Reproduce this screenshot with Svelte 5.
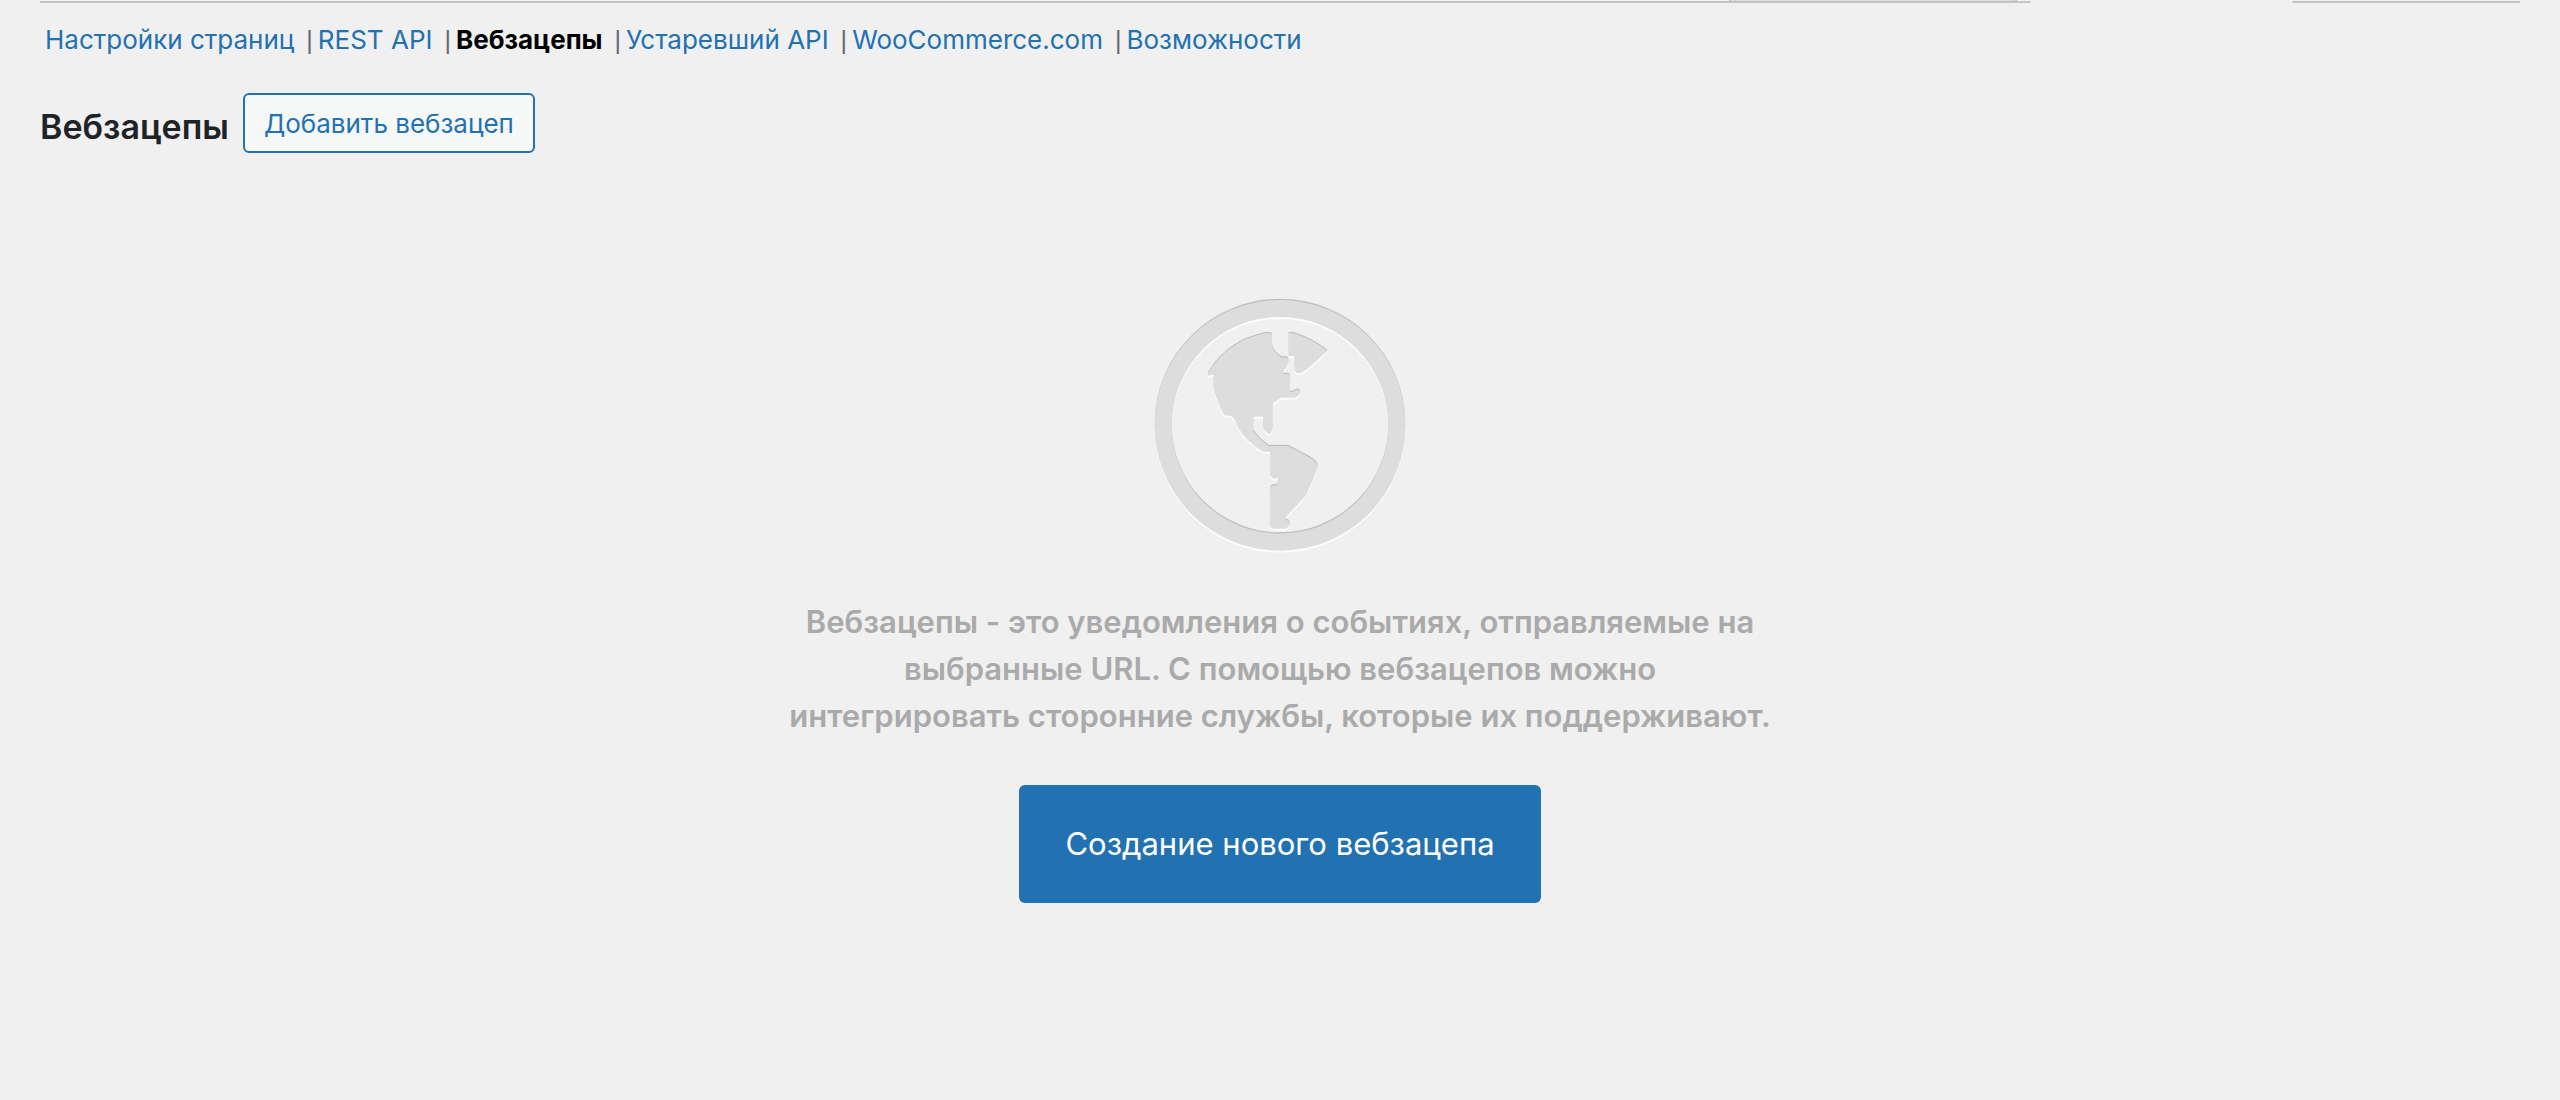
<script>
  const links = [
    { label: 'Настройки страниц' },
    { label: 'REST API' },
    { label: 'Вебзацепы', current: true },
    { label: 'Устаревший API' },
    { label: 'WooCommerce.com' },
    { label: 'Возможности' }
  ];
</script>

<svelte:head>
  <title>Вебзацепы</title>
</svelte:head>

<main class="page">
  <div class="tabs" aria-hidden="true">
    <div class="panel"><div class="segment"></div></div>
    <div class="toggle"></div>
  </div>

  <nav>
    <ul class="links">
      {#each links as link}
        <li><a href="#top" class:current={link.current} aria-current={link.current ? 'page' : undefined}>{link.label}</a></li>
      {/each}
    </ul>
  </nav>

  <header class="heading">
    <h1>Вебзацепы</h1>
    <a class="add" href="#new">Добавить вебзацеп</a>
  </header>

  <section class="blank">
    <svg class="globe" viewBox="36 48 768 774" aria-hidden="true">
      <defs>
        <filter id="soft" x="-5%" y="-5%" width="110%" height="110%"><feGaussianBlur stdDeviation="2" /></filter>
        <g id="world">
          <path fill-rule="evenodd" d="M420 60a376 376 0 1 0 0 752a376 376 0 1 0 0-752zM420 111a325 325 0 1 1 0 650a325 325 0 1 1 0-650z" />
          <path d="M204 280Q260 184 375 160H388Q396 160 396 169V197Q400 217 425 233H440Q447 235 445 248Q440 264 430 274V282H442Q450 283 450 293V333Q452 339 460 335L472 329Q481 330 480 338Q477 349 465 353H422L397 371V445Q395 461 386 461Q370 453 370 438V410H340V452Q358 479 386 498H444L510 533Q536 550 533 562Q516 610 497 648L436 712V721H440Q449 722 449 733Q446 746 434 746H402Q390 746 390 733V629Q391 617 400 617H409Q414 613 414 605V595H400Q390 592 390 580V515H370Q322 489 293 441Q285 414 272 407H258Q250 405 240 380Q221 335 221 320V285H214L204 288Z" />
          <path d="M446 160H460Q512 174 562 213L502 267Q478 287 466 275Q464 270 464 262V234Q462 228 456 228L446 229Z" />
        </g>
      </defs>
      <use href="#world" class="light" transform="translate(0 6)" />
      <use href="#world" class="dark" transform="translate(0 -4)" filter="url(#soft)" />
      <use href="#world" class="face" />
    </svg>
    <h2>Вебзацепы - это уведомления о событиях, отправляемые на выбранные URL. С помощью вебзацепов можно интегрировать сторонние службы, которые их поддерживают.</h2>
    <a class="create" href="#new">Создание нового вебзацепа</a>
  </section>
</main>

<style>
  :global(body) {
    margin: 0;
    background: #f0f0f0;
  }
  .page {
    padding: 0 40px;
    font-family: Inter, 'Liberation Sans', sans-serif;
    font-size: 26px;
    color: #1d2327;
  }
  a {
    color: #2271b1;
    text-decoration: none;
  }
  .tabs {
    display: flex;
    justify-content: space-between;
    height: 3px;
  }
  .panel,
  .toggle {
    box-sizing: border-box;
    border-bottom: 2px solid #c3c4c7;
  }
  .panel {
    display: flex;
    justify-content: flex-end;
    flex: 0 1 1991px;
    padding-right: 14px;
    background: #f3f4f1;
    border-bottom-right-radius: 2px;
  }
  .segment {
    width: 288px;
    height: 1px;
    box-sizing: border-box;
    background: #dcdcde;
    border: solid #c3c4c7;
    border-width: 0 2px;
  }
  .toggle {
    flex: 0 0 228px;
    border-bottom-left-radius: 2px;
  }
  .links {
    display: flex;
    margin: 0;
    padding: 17px 0 0;
    list-style: none;
    line-height: 40px;
    color: #646970;
    white-space: nowrap;
  }
  .links a {
    padding: 0 5px;
  }
  .links li:not(:last-child)::after {
    content: ' |';
    font-family: 'Liberation Sans', sans-serif;
    font-size: 25px;
    line-height: 1;
  }
  .links .current {
    color: #000;
    font-weight: 700;
  }
  .heading {
    display: flex;
    align-items: center;
    gap: 14px;
    margin-top: 33px;
  }
  h1 {
    margin: 0;
    padding-top: 8px;
    font-size: 34px;
    line-height: 44px;
    font-weight: 600;
  }
  .add {
    box-sizing: border-box;
    padding: 2px 19px 0;
    border: 2px solid #2271b1;
    border-radius: 6px;
    background: #f6f7f7;
    line-height: 54px;
  }
  .add,
  .create {
    white-space: nowrap;
  }
  .blank {
    display: flex;
    flex-direction: column;
    align-items: center;
    padding-top: 143px;
    text-align: center;
  }
  .globe {
    width: 256px;
    height: 258px;
  }
  .light {
    fill: #fff;
    fill-opacity: 0.8;
  }
  .dark {
    fill: #000;
    fill-opacity: 0.2;
  }
  .face {
    fill: #ddd;
  }
  h2 {
    max-width: 986px;
    margin: 44px 0 0;
    font-size: 31px;
    line-height: 47px;
    font-weight: 600;
    color: #aaa;
  }
  .create {
    margin-top: 46px;
    padding: 0 46px;
    border-radius: 6px;
    background: #2271b1;
    color: #fff;
    font-size: 31px;
    line-height: 118px;
  }
</style>
